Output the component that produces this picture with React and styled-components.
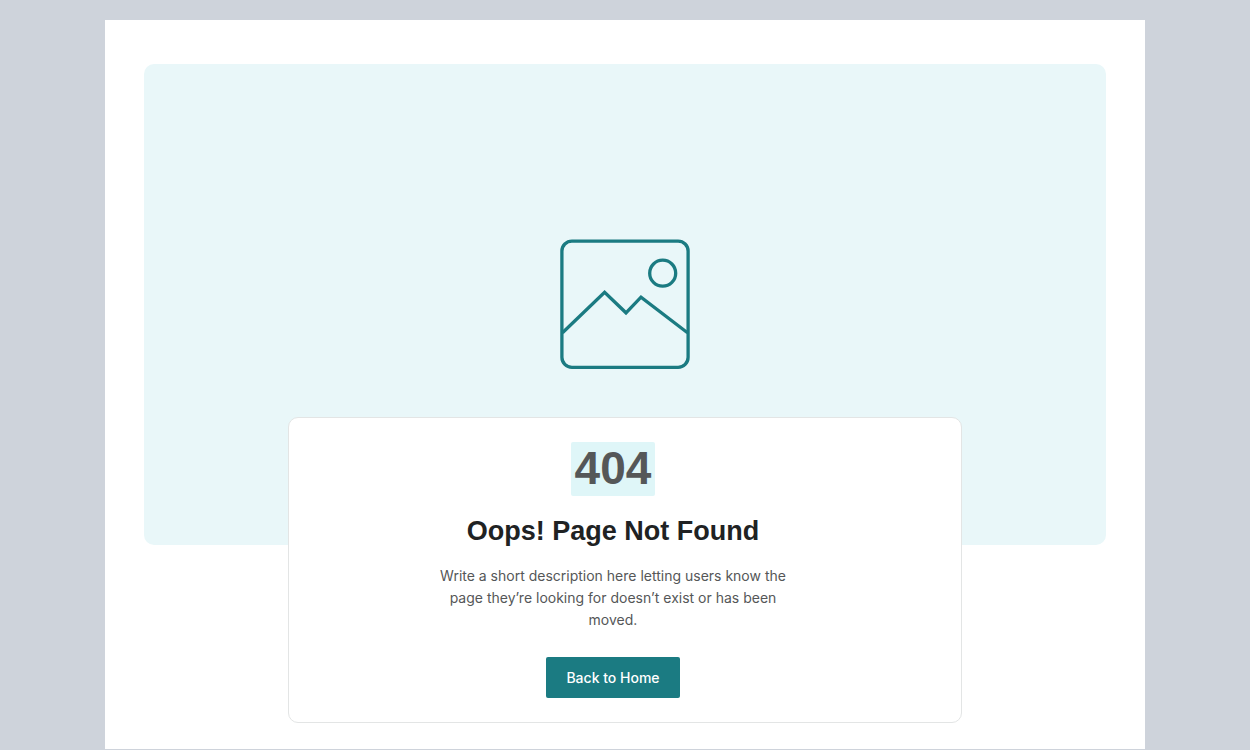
import React from "react";
import styled, { createGlobalStyle } from "styled-components";

const GlobalStyle = createGlobalStyle`
  * {
    box-sizing: border-box;
  }
  body {
    margin: 0;
    background: #ced3db;
    font-family: Inter, "Liberation Sans", sans-serif;
  }
`;

const Page = styled.div`
  padding: 20px 20px 1px;
`;
const Sheet = styled.main`
  max-width: 1040px;
  margin: 0 auto;
  padding: 44px 39px 26px;
  background: #ffffff;
`;
const Hero = styled.div`
  display: flex;
  align-items: center;
  justify-content: center;
  aspect-ratio: 2 / 1;
  border-radius: 10px;
  background: #e9f7f9;
`;
const Picture = styled.svg`
  width: 130px;
  height: 130px;
  overflow: visible;
  fill: none;
  stroke: #1b7b82;
  stroke-width: 3.3;
`;
const Card = styled.section`
  position: relative;
  display: flex;
  flex-direction: column;
  align-items: center;
  width: 70%;
  margin: -128px auto 0;
  padding: 24px 48px 24px 24px;
  border: 1px solid #e3e5e5;
  border-radius: 10px;
  background: #ffffff;
  text-align: center;
`;
const Code = styled.div`
  padding: 0 4px 2px;
  border-radius: 2px;
  background: #dff6f8;
  color: #555758;
  font-family: "Liberation Sans", Arial, sans-serif;
  font-size: 46px;
  font-weight: 700;
  line-height: 52px;
`;
const Title = styled.h1`
  margin: 17px 0 16px;
  color: #202223;
  font-family: "Liberation Sans", Arial, sans-serif;
  font-size: 27px;
  font-weight: 700;
  line-height: 36px;
`;
const Description = styled.p`
  max-width: 360px;
  margin: 0 0 26px;
  color: #555758;
  font-size: 14px;
  line-height: 22px;
`;
const HomeLink = styled.a`
  padding: 0 20px;
  border-radius: 2px;
  background: #1b7b82;
  color: #ffffff;
  font-size: 14px;
  font-weight: 500;
  line-height: 41px;
  text-decoration: none;
`;

const App = () => {
  return (
    <>
      <GlobalStyle />
      <Page>
        <Sheet>
          <Hero>
            <Picture viewBox="0 0.8 130 130" aria-hidden="true">
              <rect x="1.9" y="1.9" width="126.2" height="126.2" rx="10" />
              <circle cx="102.7" cy="34" r="13" />
              <path d="M2.5 93.5 44.6 53l21.4 20.6L81 58l46.5 35.5" />
            </Picture>
          </Hero>
          <Card>
            <Code>404</Code>
            <Title>Oops! Page Not Found</Title>
            <Description>
              Write a short description here letting users know the page they’re
              looking for doesn’t exist or has been moved.
            </Description>
            <HomeLink href="/">Back to Home</HomeLink>
          </Card>
        </Sheet>
      </Page>
    </>
  );
};

export default App;
